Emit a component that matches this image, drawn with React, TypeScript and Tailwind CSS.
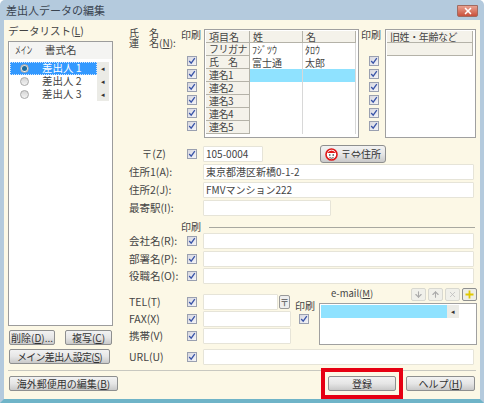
import React from 'react';
import { ArrowDown, ArrowUp, X } from 'lucide-react';

const font = { fontFamily: '"Noto Sans CJK JP", "Liberation Sans", sans-serif' };

function Check() {
  return (
    <span className="flex h-[10px] w-[10px] shrink-0 items-center justify-center border border-[#9aa0b0] bg-gradient-to-br from-[#d8d8e0] to-[#f4f4f8]">
      <svg width="8" height="8" viewBox="0 0 8 8">
        <path d="M1.2 4 L3.2 6.2 L6.8 1.2" fill="none" stroke="#3a55a8" strokeWidth="1.3" />
      </svg>
    </span>
  );
}

function Btn({ children, className = '' }: { children: React.ReactNode; className?: string }) {
  return (
    <button className={`flex items-center justify-center rounded-[2px] border border-[#8e8f8f] bg-gradient-to-b from-[#f2f2f2] via-[#e6e6e6] to-[#c9c9c9] text-[10px] leading-none text-[#333] ${className}`}>
      <span className="flex items-center gap-[3px] whitespace-nowrap">{children}</span>
    </button>
  );
}

function Field({ children, className = 'w-[271px]' }: { children?: React.ReactNode; className?: string }) {
  return (
    <div className={`flex h-[16px] items-center rounded-[1px] border border-[#e6e4d8] bg-white px-[2px] text-[10px] leading-none whitespace-nowrap text-[#444] ${className}`}>
      {children}
    </div>
  );
}

// label / print checkbox / input
function Row({ label, className = '', children }: { label: string; className?: string; children: React.ReactNode }) {
  return (
    <div className={`flex items-center ${className}`}>
      <span className="w-[58px] shrink-0 whitespace-nowrap text-[10.5px] leading-none text-[#444]">{label}</span>
      <span className="w-[16px] shrink-0"><Check /></span>
      {children}
    </div>
  );
}

function PlainRow({ label, children, className = '' }: { label: string; children: React.ReactNode; className?: string }) {
  return (
    <div className={`flex items-center ${className}`}>
      <span className="w-[74px] shrink-0 whitespace-nowrap text-[10.5px] leading-none text-[#444]">{label}</span>
      {children}
    </div>
  );
}

function Head({ children, className = '' }: { children?: React.ReactNode; className?: string }) {
  return (
    <div className={`flex items-center whitespace-nowrap border-b border-r border-[#b4b2a8] bg-[#f4f2ea] pl-[3px] text-[10px] leading-none text-[#444] ${className}`}>
      {children}
    </div>
  );
}

function Cell({ children, className = '' }: { children?: React.ReactNode; className?: string }) {
  return (
    <div className={`flex items-center whitespace-nowrap border-r border-[#d8d8d8] pl-[2px] text-[10px] leading-none text-[#444] ${className}`}>
      {children}
    </div>
  );
}

const names = [
  ['フリガナ', 'ﾌｼﾞﾂｳ', 'ﾀﾛｳ'],
  ['氏　名', '富士通', '太郎'],
  ['連名1', '', ''],
  ['連名2', '', ''],
  ['連名3', '', ''],
  ['連名4', '', ''],
  ['連名5', '', ''],
];

function SenderRow({ name, selected }: { name: string; selected?: boolean }) {
  return (
    <div className="flex h-[13px] items-stretch">
      <div className={`flex w-[87px] items-center ${selected ? 'border border-dotted border-[#cfe4ff] bg-[#3399ff] text-white' : 'border border-transparent text-[#444]'}`}>
        <span className="ml-[9px] flex h-[9px] w-[9px] items-center justify-center rounded-full border border-[#a8a8a8] bg-gradient-to-b from-[#d4d4d4] to-[#f4f4f4]">
          {selected && <span className="h-[5px] w-[5px] rounded-full bg-[#1c6a9c]" />}
        </span>
        <span className="ml-[13px] whitespace-nowrap text-[10.5px] leading-none">{name}</span>
      </div>
      <div className="flex w-[12px] items-center justify-center bg-[#ebebe6] text-[7px] leading-none text-[#333]">◂</div>
    </div>
  );
}

function ToolBtn({ children, active }: { children: React.ReactNode; active?: boolean }) {
  return (
    <span className={`flex h-[13px] w-[15px] items-center justify-center rounded-[2px] border ${active ? 'border-[#8e8f8f] bg-[#eeeee6]' : 'border-[#d8d8d0] bg-[#f0f0ea]'}`}>
      {children}
    </span>
  );
}

export default function App() {
  return (
    <div style={font} className="flex h-[403px] w-[484px] flex-col overflow-hidden rounded-t-[5px] border-x-[4px] border-b-[4px] border-x-[#b4cadd] border-b-[#6fb4c8] bg-[#b4cadd]">
      {/* Title bar */}
      <div className="flex h-[20px] shrink-0 items-start justify-between">
        <span className="mt-[2px] pl-[2px] text-[11px] leading-[16px] text-[#3a4450]">差出人データの編集</span>
        <span className="mt-[5px] mr-[2px] flex h-[12px] w-[21px] items-center justify-center rounded-b-[2px] border border-[#a06a60] bg-gradient-to-b from-[#e8a090] to-[#c8503c]">
          <X size={10} strokeWidth={4} className="text-white" />
        </span>
      </div>

      <div className="flex min-h-0 flex-1 flex-col bg-[#fcf8e6] pt-[4px]">
        <div className="flex h-[345px] shrink-0">
          {/* Sender list */}
          <div className="ml-[4px] flex w-[105px] shrink-0 flex-col">
            <span className="h-[17px] text-[10.5px] leading-[13px] text-[#444]">データリスト(<span className="underline">L</span>)</span>
            <div className="h-[285px] border border-[#9c9c9c] bg-white pl-[1px]">
              <div className="flex h-[17px] items-center bg-[#f4f4f2] text-[10.5px] leading-none text-[#444]">
                <span className="ml-[5px] w-[30px] origin-left scale-x-[0.55] whitespace-nowrap">メイン</span>
                <span>書式名</span>
              </div>
              <div className="mt-[3px]">
                <SenderRow name="差出人 1" selected />
                <SenderRow name="差出人 2" />
                <SenderRow name="差出人 3" />
              </div>
            </div>
            <div className="mt-[4px] flex justify-between px-[1px]">
              <Btn className="h-[15px] w-[46px]"><span>削除(<span className="underline">D</span>)...</span></Btn>
              <Btn className="h-[15px] w-[47px]"><span>複写(<span className="underline">C</span>)</span></Btn>
            </div>
            <Btn className="mx-[1px] mt-[4px] h-[15px] w-[101px]"><span className="tracking-[-0.7px]">メイン差出人設定(<span className="underline">S</span>)</span></Btn>
          </div>

          {/* Form */}
          <div className="ml-[16px] flex w-[348px] shrink-0 flex-col">
            {/* Names */}
            <div className="flex h-[114px] shrink-0 pt-[5px]">
              <div className="w-[52px] -translate-y-px text-[10px] leading-[10px] text-[#444]">
                <div className="whitespace-nowrap">氏　名</div>
                <div className="whitespace-nowrap">連　名(<span className="underline">N</span>):</div>
              </div>
              <div className="flex w-[23px] shrink-0 flex-col items-start">
                <span className="h-[27px] text-[10px] leading-[12px] text-[#444]">印刷</span>
                <div className="flex flex-col gap-[3px] pl-[6px]">
                  {names.slice(1).map((n) => <Check key={n[0]} />)}
                </div>
              </div>
              <div className="h-[109px] w-[155px] shrink-0 border border-[#a0a0a0] bg-white p-[1px]">
                <div className="grid grid-cols-[44px_53px_53px] grid-rows-[12px_repeat(7,13px)]">
                  <Head>項目名</Head>
                  <Head>姓</Head>
                  <Head>名</Head>
                  {names.map((n, i) => (
                    <React.Fragment key={n[0]}>
                      <Head className="tracking-[-0.5px]">{n[0]}</Head>
                      <Cell className={i === 2 ? 'bg-[#8fe2ff]' : ''}>{n[1]}</Cell>
                      <Cell className={i === 2 ? 'bg-[#8fe2ff]' : ''}>{n[2]}</Cell>
                    </React.Fragment>
                  ))}
                </div>
              </div>
              <div className="ml-[2px] flex w-[24px] shrink-0 flex-col items-start">
                <span className="h-[27px] text-[10px] leading-[12px] text-[#444]">印刷</span>
                <div className="flex flex-col gap-[3px] pl-[8px]">
                  {names.slice(1).map((n) => <Check key={n[0]} />)}
                </div>
              </div>
              <div className="h-[109px] w-[91px] shrink-0 border border-[#a0a0a0] bg-white p-[1px]">
                <Head className="h-[12px] w-[86px] tracking-[-0.4px]">旧姓・年齢など</Head>
                <Head className="h-[13px] w-[86px]" />
              </div>
            </div>

            <Row label="　  〒(Z)" className="mt-[7px]">
              <Field className="w-[60px]">105-0004</Field>
              <Btn className="ml-[57px] h-[18px] w-[66px] rounded-[3px]">
                <svg width="13" height="13" viewBox="0 0 13 13">
                  <circle cx="6.5" cy="6.5" r="5.5" fill="#fff" stroke="#e01818" strokeWidth="1.6" />
                  <path d="M2 5 Q6.5 0 11 5 Z" fill="#e01818" />
                  <circle cx="4.8" cy="7" r="0.8" fill="#222" />
                  <circle cx="8.2" cy="7" r="0.8" fill="#222" />
                  <path d="M4.5 9.5 Q6.5 11 8.5 9.5" fill="none" stroke="#222" strokeWidth="0.8" />
                </svg>
                <span>〒⇔住所</span>
              </Btn>
            </Row>
            <PlainRow label="住所1(A):" className="mt-[1px]"><Field>東京都港区新橋0-1-2</Field></PlainRow>
            <PlainRow label="住所2(J):" className="mt-[2px]"><Field>FMVマンション222</Field></PlainRow>
            <PlainRow label="最寄駅(I):" className="mt-[2px]"><Field className="w-[128px]" /></PlainRow>

            <div className="mt-[5px] flex h-[12px] items-center pl-[52px]">
              <span className="text-[10px] leading-none text-[#444]">印刷</span>
              <span className="ml-[8px] h-px w-[266px] bg-[#a8a8a0]" />
            </div>
            <Row label="会社名(R):"><Field /></Row>
            <Row label="部署名(P):" className="mt-[2px]"><Field /></Row>
            <Row label="役職名(O):" className="mt-[1px]"><Field /></Row>

            {/* Phone + e-mail */}
            <div className="mt-[10px] flex h-[51px] shrink-0">
              <div className="flex w-[163px] shrink-0 flex-col gap-[1px]">
                <Row label=" TEL(T)">
                  <Field className="w-[75px]" />
                  <span className="ml-[1px] flex h-[14px] w-[11px] items-center justify-center rounded-[2px] border border-[#999] bg-[#eee] text-[9px] leading-none text-[#555]">〒</span>
                </Row>
                <Row label=" FAX(X)"><Field className="w-[88px]" /></Row>
                <Row label=" 携帯(V)"><Field className="w-[88px]" /></Row>
              </div>
              <div className="ml-[3px] mt-[6px] flex w-[24px] shrink-0 flex-col items-start">
                <span className="text-[10px] leading-[12px] text-[#444]">印刷</span>
                <span className="ml-[4px] mt-[2px]"><Check /></span>
              </div>
              <div className="flex w-[158px] shrink-0 flex-col">
                <div className="flex h-[10px] items-start justify-between">
                  <span className="ml-[12px] -mt-[7px] text-[9.5px] leading-[12px] text-[#444]">e-mail(<span className="underline">M</span>)</span>
                  <span className="-mt-[6px] flex gap-[2px]">
                    <ToolBtn><ArrowDown size={9} strokeWidth={3} className="text-[#aaa]" /></ToolBtn>
                    <ToolBtn><ArrowUp size={9} strokeWidth={3} className="text-[#aaa]" /></ToolBtn>
                    <ToolBtn><X size={9} strokeWidth={2} className="text-[#bbb]" /></ToolBtn>
                    <ToolBtn active>
                      <svg width="9" height="9" viewBox="0 0 9 9">
                        <path d="M4.5 0.5 V8.5 M0.5 4.5 H8.5" stroke="#e0c800" strokeWidth="1.8" />
                      </svg>
                    </ToolBtn>
                  </span>
                </div>
                <div className="h-[45px] border border-[#a0a0a0] bg-white p-[1px]">
                  <div className="flex h-[13px] w-[138px] bg-[#8fe2ff]">
                    <span className="ml-auto flex w-[12px] items-center justify-center bg-[#ebebe6] text-[7px] leading-none text-[#333]">◂</span>
                  </div>
                </div>
              </div>
            </div>

            <Row label=" URL(U)" className="mt-[4px]"><Field /></Row>
          </div>
        </div>

        <div className="mx-[4px] mt-[1px] h-px shrink-0 bg-[#c8c8c0]" />

        {/* Bottom buttons */}
        <div className="mt-[5px] flex shrink-0 items-center">
          <Btn className="ml-[5px] h-[15px] w-[109px]"><span>海外郵便用の編集(<span className="underline">B</span>)</span></Btn>
          <div className="relative ml-[210px]">
            <Btn className="h-[15px] w-[68px]">登録</Btn>
            <div className="absolute -inset-x-[7px] -inset-y-[8px] border-[4px] border-[#e60012]" />
          </div>
          <Btn className="ml-[10px] h-[15px] w-[69px]"><span>ヘルプ(<span className="underline">H</span>)</span></Btn>
        </div>
      </div>
    </div>
  );
}
